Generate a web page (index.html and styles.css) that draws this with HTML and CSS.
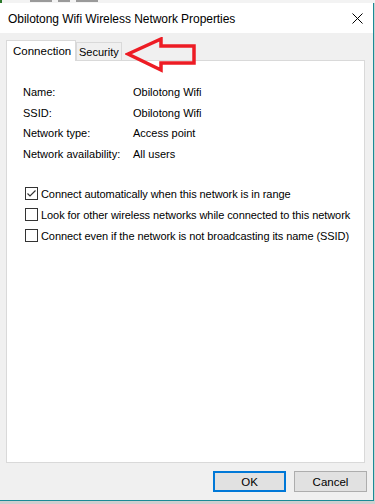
FILE: index.html
```html
<!DOCTYPE html>
<html>
<head>
    <title>Obilotong Wifi Wireless Network Properties</title>
    <link rel="stylesheet" href="styles.css">
</head>
<body>
  <div class="behind">
    <span class="behind-mark"></span>
    <span class="behind-mark short"></span>
    <span class="behind-mark"></span>
  </div>
  <div class="window">
    <div class="titlebar">
      <span class="title">Obilotong Wifi Wireless Network Properties</span>
      <svg class="close" width="11" height="11" viewBox="0 0 11 11">
        <path d="M0.5 0.5 L10.5 10.5 M10.5 0.5 L0.5 10.5" stroke="#000" stroke-width="1" fill="none"/>
      </svg>
    </div>
    <div class="dialog-body">
      <div class="tabs">
        <div class="tab active">Connection</div>
        <div class="tab">Security</div>
        <!-- red annotation arrow drawn over the dialog -->
        <svg class="arrow" width="76" height="38" viewBox="0 0 76 38">
          <polygon points="3,17 36,2 36,9 69,9 69,26 36,26 36,33" fill="none" stroke="#ed1c24" stroke-width="3.5" stroke-linejoin="miter"/>
        </svg>
      </div>
      <div class="panel">
        <div class="info">
          <span class="label">Name:</span><span class="value">Obilotong Wifi</span>
          <span class="label">SSID:</span><span class="value">Obilotong Wifi</span>
          <span class="label">Network type:</span><span class="value">Access point</span>
          <span class="label">Network availability:</span><span class="value">All users</span>
        </div>
        <div class="checks">
          <label class="check">
            <span class="box checked">
              <svg width="11" height="11" viewBox="0 0 11 11">
                <path d="M1.5 5.5 L4 8 L9.5 2.5" stroke="#333" stroke-width="1.2" fill="none"/>
              </svg>
            </span>
            Connect automatically when this network is in range
          </label>
          <label class="check">
            <span class="box"></span>
            Look for other wireless networks while connected to this network
          </label>
          <label class="check">
            <span class="box"></span>
            Connect even if the network is not broadcasting its name (SSID)
          </label>
        </div>
      </div>
      <div class="buttons">
        <button class="btn default">OK</button>
        <button class="btn">Cancel</button>
      </div>
    </div>
  </div>
</body>
</html>
```

FILE: styles.css
```css
/* Windows wireless properties dialog */
body {
    margin: 0;
    width: 375px;
    height: 504px;
    overflow: hidden;
    background: #cfcfcf;
    font-family: 'Liberation Sans', Arial, sans-serif;
    font-size: 11px;
    color: #000;
}

/* sliver of the window behind the dialog */
.behind {
    height: 3px;
    overflow: hidden;
    background: #f3f3f3;
    border-left: 2px solid #2c7a2c;
    display: flex;
    gap: 6px;
    padding-left: 28px;
}

.behind-mark {
    width: 22px;
    height: 2px;
    background: #9a9a9a;
}

.behind-mark.short {
    width: 12px;
}

.window {
    width: 373px;
    height: 497px;
    display: flex;
    flex-direction: column;
    background: #f0f0f0;
    border-right: 1px solid #1a8a96;
    border-bottom: 1px solid #1a8a96;
}

.titlebar {
    height: 30px;
    background: #fff;
    display: flex;
    align-items: center;
    justify-content: space-between;
    padding: 0 10px 0 8px;
}

.title {
    font-size: 12px;
    letter-spacing: -0.05px;
    margin-top: 1px;
}

.dialog-body {
    flex: 1;
    display: flex;
    flex-direction: column;
    padding: 7px 8px 0 6px;
}

.tabs {
    position: relative;
    display: flex;
    align-items: flex-end;
    height: 20px;
}

.tab {
    height: 18px;
    line-height: 18px;
    padding: 0 2px;
    background: #f0f0f0;
    border: 1px solid #d9d9d9;
    border-bottom: none;
    box-sizing: border-box;
}

.tab.active {
    width: 70px;
    height: 21px;
    line-height: 20px;
    padding: 0 0 0 6px;
    background: #fff;
    margin-bottom: -1px;
    position: relative;
    z-index: 1;
    font-size: 11.5px;
}

.arrow {
    position: absolute;
    left: 119px;
    top: -3px;
}

.panel {
    height: 403px;
    box-sizing: border-box;
    background: #fff;
    border: 1px solid #d9d9d9;
    padding: 21px 0 0 16px;
}

.info {
    display: grid;
    grid-template-columns: 110px 1fr;
    line-height: 20.6px;
}

.checks {
    margin-top: 19px;
    display: flex;
    flex-direction: column;
}

.check {
    display: flex;
    align-items: center;
    height: 21px;
    gap: 3px;
    white-space: nowrap;
    letter-spacing: -0.07px;
}

.box {
    width: 13px;
    height: 13px;
    box-sizing: border-box;
    border: 1px solid #333;
    background: #fff;
    margin-left: 2px;
    display: flex;
    align-items: center;
    justify-content: center;
}

.buttons {
    display: flex;
    justify-content: flex-end;
    gap: 8px;
    margin-top: 8px;
    margin-right: -2px;
}

.btn {
    width: 73px;
    height: 21px;
    box-sizing: border-box;
    font-family: inherit;
    font-size: 11.5px;
    background: #e1e1e1;
    border: 1px solid #adadad;
    border-radius: 0;
    padding: 0;
    color: #000;
}

.btn.default {
    border: 2px solid #0078d7;
}
```
